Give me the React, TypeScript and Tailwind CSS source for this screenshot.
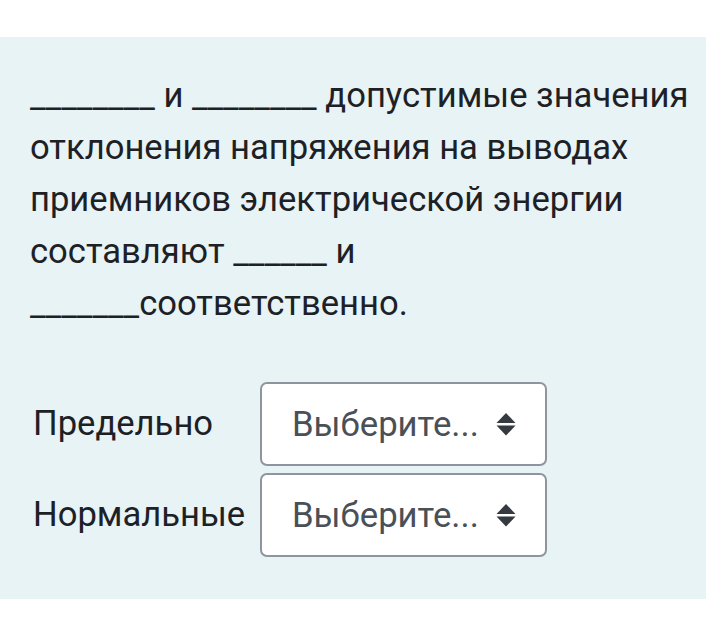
import React from "react";

function Arrows() {
  return (
    <svg width="20" height="24" viewBox="0 0 20 24" className="shrink-0">
      <polygon points="10,1 19.5,11 0.5,11" fill="#343a40" />
      <polygon points="0.5,13.5 19.5,13.5 10,23.5" fill="#343a40" />
    </svg>
  );
}

function Select() {
  return (
    <div className="flex h-[84px] w-[287px] items-center justify-between rounded-[7px] border-2 border-[#8f959e] bg-white pl-[30px] pr-[29px] text-[34.7px] text-[#495057]">
      <span>Выберите...</span>
      <Arrows />
    </div>
  );
}

export default function App() {
  return (
    <div className="h-[636px] w-[706px] bg-white" style={{ fontFamily: "Roboto, 'Noto Sans', sans-serif" }}>
      <div className="h-[37px]" />
      <div className="h-[562px] bg-[#e7f3f5] pl-[30px] pt-[32px] text-[#1d2125]">
        <div className="whitespace-nowrap text-[34.6px] leading-[52px]">
          <div>________ и ________ допустимые значения</div>
          <div>отклонения напряжения на выводах</div>
          <div>приемников электрической энергии</div>
          <div>составляют ______ и</div>
          <div>_______соответственно.</div>
        </div>
        <div className="mt-[53px] flex flex-col gap-[7px]">
          <div className="flex items-center">
            <div className="w-[230px] pl-[3px] text-[34.6px]">Предельно</div>
            <Select />
          </div>
          <div className="flex items-center">
            <div className="w-[230px] pl-[3px] text-[34.6px]">Нормальные</div>
            <Select />
          </div>
        </div>
      </div>
    </div>
  );
}
